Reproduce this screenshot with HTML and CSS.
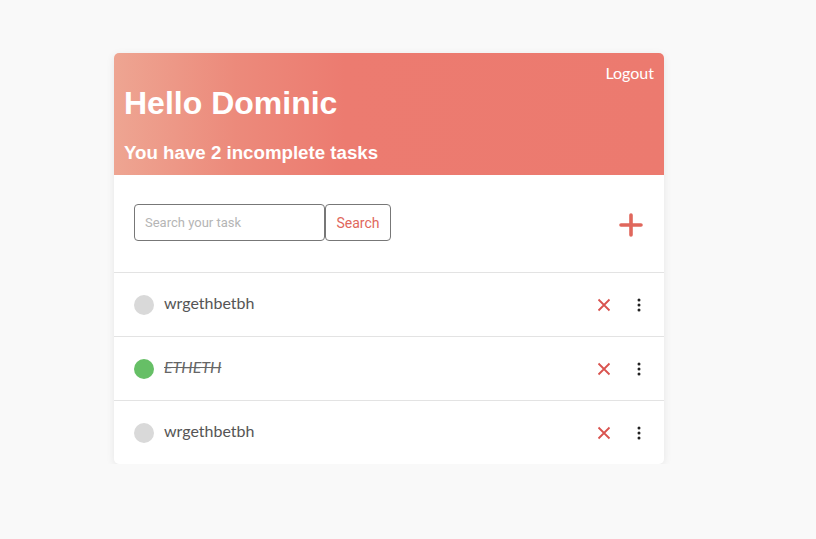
FILE: index.html
```html
<!DOCTYPE html>
<html>
<head>
<meta charset="utf-8">
<link rel="stylesheet" href="styles.css">
</head>
<body>
<div class="card">
  <div class="header">
    <div class="logout">Logout</div>
    <h1 class="hello">Hello Dominic</h1>
    <div class="sub">You have 2 incomplete tasks</div>
  </div>
  <div class="toolbar">
    <div class="search">
      <input class="search-input" type="text" placeholder="Search your task">
      <button class="search-btn">Search</button>
    </div>
    <svg class="plus" width="24" height="24" viewBox="0 0 24 24">
      <path d="M12 2 V22 M2 12 H22" stroke="#e0675c" stroke-width="3.6" stroke-linecap="round"/>
    </svg>
  </div>
  <div class="row">
    <span class="dot"></span>
    <span class="task">wrgethbetbh</span>
    <svg class="del" width="14" height="14" viewBox="0 0 14 14"><path d="M1.5 1.5 L12.5 12.5 M12.5 1.5 L1.5 12.5" stroke="#d9534f" stroke-width="1.8"/></svg>
    <svg class="more" width="4" height="14" viewBox="0 0 4 14"><circle cx="2" cy="2" r="1.5"/><circle cx="2" cy="7" r="1.5"/><circle cx="2" cy="12" r="1.5"/></svg>
  </div>
  <div class="row">
    <span class="dot done"></span>
    <span class="task striked">ETHETH</span>
    <svg class="del" width="14" height="14" viewBox="0 0 14 14"><path d="M1.5 1.5 L12.5 12.5 M12.5 1.5 L1.5 12.5" stroke="#d9534f" stroke-width="1.8"/></svg>
    <svg class="more" width="4" height="14" viewBox="0 0 4 14"><circle cx="2" cy="2" r="1.5"/><circle cx="2" cy="7" r="1.5"/><circle cx="2" cy="12" r="1.5"/></svg>
  </div>
  <div class="row">
    <span class="dot"></span>
    <span class="task">wrgethbetbh</span>
    <svg class="del" width="14" height="14" viewBox="0 0 14 14"><path d="M1.5 1.5 L12.5 12.5 M12.5 1.5 L1.5 12.5" stroke="#d9534f" stroke-width="1.8"/></svg>
    <svg class="more" width="4" height="14" viewBox="0 0 4 14"><circle cx="2" cy="2" r="1.5"/><circle cx="2" cy="7" r="1.5"/><circle cx="2" cy="12" r="1.5"/></svg>
  </div>
</div>
</body>
</html>
```
FILE: styles.css
```css
html, body {
  margin: 0;
  padding: 0;
  background: #f9f9f9;
}
body {
  padding-top: 53px;
  font-family: "Liberation Sans", Arial, sans-serif;
}
.card {
  width: 550px;
  margin-left: 114px;
  background: #fff;
  border-radius: 5px;
  box-shadow: 0 2px 8px rgba(0,0,0,0.08);
  overflow: hidden;
}
.header {
  height: 122px;
  box-sizing: border-box;
  padding: 10px 10px 11px 10px;
  background: linear-gradient(90deg, #eea592 0%, #ec8a7b 22%, #ec7b70 42%, #ec7a6f 100%);
  color: #fff;
  display: flex;
  flex-direction: column;
}
.logout {
  align-self: flex-end;
  font-family: Lato, "Open Sans", sans-serif;
  font-size: 16px;
  line-height: 20px;
  height: 20px;
}
.hello {
  margin: 2px 0 0 0;
  font-size: 32px;
  line-height: 36px;
  font-weight: bold;
}
.sub {
  margin-top: 21px;
  font-size: 18.7px;
  line-height: 22px;
  font-weight: bold;
}
.toolbar {
  height: 97px;
  box-sizing: border-box;
  padding: 29px 21px 0 20px;
  display: flex;
  justify-content: space-between;
  align-items: flex-start;
}
.search {
  display: flex;
}
.search-input {
  width: 191px;
  height: 37px;
  box-sizing: border-box;
  border: 1px solid #777;
  border-radius: 4px;
  padding: 0 10px;
  font-family: Roboto, sans-serif;
  font-size: 13px;
  outline: none;
}
.search-input::placeholder {
  color: #b5b5b5;
}
.search-btn {
  width: 66px;
  height: 37px;
  box-sizing: border-box;
  border: 1px solid #777;
  border-radius: 4px;
  background: #fff;
  color: #e0675c;
  font-family: Roboto, sans-serif;
  font-size: 14px;
  padding: 0;
}
.plus {
  margin-top: 9px;
}
.row {
  height: 64px;
  box-sizing: border-box;
  border-top: 1px solid #e3e3e3;
  display: flex;
  align-items: center;
  padding: 0 23px 0 20px;
}
.dot {
  width: 20px;
  height: 20px;
  border-radius: 50%;
  background: #d9d9d9;
  flex: none;
}
.dot.done {
  background: #66bf66;
}
.task {
  margin-left: 10px;
  padding-bottom: 4px;
  flex: 1;
  font-family: Lato, "Open Sans", sans-serif;
  font-size: 16px;
  color: #555;
}
.striked {
  font-style: italic;
  text-decoration: line-through;
  color: #666;
}
.del {
  margin-right: 26px;
}
.more {
  fill: #222;
}
```
